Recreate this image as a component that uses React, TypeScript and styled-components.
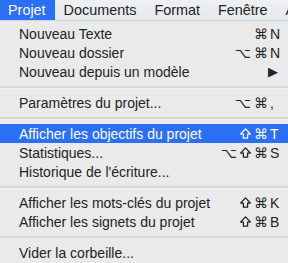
import React from 'react';
import styled, { createGlobalStyle } from 'styled-components';

const GlobalStyle = createGlobalStyle`
	html, body {
		margin: 0;
		padding: 0;
		background: #ebebeb;
	}
	body {
		font-family: 'Liberation Sans', Arial, sans-serif;
		-webkit-font-smoothing: antialiased;
	}
`;

const Screen = styled.div`
	width: 288px;
	height: 263px;
	overflow: hidden;
	background: #eaeaea;
	color: #232323;
`;

const MenuBar = styled.div`
	display: flex;
	height: 21px;
	background: linear-gradient(#eef0f3, #e6e9ed);
	border-bottom: 1px solid #cfd1d4;
	box-sizing: border-box;
	white-space: nowrap;
	overflow: hidden;
`;

const BarItem = styled.div<{ $active?: boolean }>`
	display: flex;
	align-items: center;
	flex-shrink: 0;
	padding: 0 9px;
	font-size: 14.4px;
	background: ${(p) => (p.$active ? '#2a6ff4' : 'transparent')};
	color: ${(p) => (p.$active ? '#ffffff' : '#222222')};

	&:first-child {
		padding-left: 8px;
	}
`;

const Menu = styled.div`
	display: flex;
	flex-direction: column;
	padding-top: 3px;
	background: #eaeaea;
`;

const Row = styled.div<{ $selected?: boolean }>`
	display: flex;
	align-items: center;
	justify-content: space-between;
	height: 19px;
	padding: 0 6px 0 19px;
	font-size: 14px;
	white-space: nowrap;
	background: ${(p) => (p.$selected ? '#2a6ff4' : 'transparent')};
	color: ${(p) => (p.$selected ? '#ffffff' : '#232323')};
`;

const Separator = styled.div`
	height: 12px;
	display: flex;
	align-items: center;

	&::after {
		content: '';
		display: block;
		width: 100%;
		height: 2px;
		background: #d6d6d6;
		border-bottom: 1px solid #f2f2f2;
	}
`;

const Shortcut = styled.div`
	display: flex;
	align-items: center;
	font-family: 'DejaVu Sans', 'Liberation Sans', sans-serif;
`;

const Mods = styled.span`
	display: flex;
	align-items: center;
	gap: 3px;
	font-size: 14px;
`;

const Key = styled.span`
	width: 12px;
	margin-left: 2px;
	font-family: 'Liberation Sans', Arial, sans-serif;
	font-size: 14px;
	text-align: left;
`;

const Arrow = styled.span`
	font-family: 'DejaVu Sans', sans-serif;
	font-size: 13px;
	margin-right: 4px;
`;

const ShiftIcon = () => (
	<svg width="11" height="11" viewBox="0 0 11 11" fill="none">
		<path
			d="M5.5 0.9 L10.3 6 H7.6 V10.2 H3.4 V6 H0.7 Z"
			stroke="currentColor"
			strokeWidth="1.25"
			strokeLinejoin="round"
		/>
	</svg>
);

type Item =
	| { kind: 'sep' }
	| { kind: 'item'; label: string; mods?: string; key?: string; submenu?: boolean; selected?: boolean };

const items: Item[] = [
	{ kind: 'item', label: 'Nouveau Texte', mods: '⌘', key: 'N' },
	{ kind: 'item', label: 'Nouveau dossier', mods: '⌥⌘', key: 'N' },
	{ kind: 'item', label: 'Nouveau depuis un modèle', submenu: true },
	{ kind: 'sep' },
	{ kind: 'item', label: 'Paramètres du projet...', mods: '⌥⌘', key: ',' },
	{ kind: 'sep' },
	{ kind: 'item', label: 'Afficher les objectifs du projet', mods: '⇧⌘', key: 'T', selected: true },
	{ kind: 'item', label: 'Statistiques...', mods: '⌥⇧⌘', key: 'S' },
	{ kind: 'item', label: "Historique de l'écriture..." },
	{ kind: 'sep' },
	{ kind: 'item', label: 'Afficher les mots-clés du projet', mods: '⇧⌘', key: 'K' },
	{ kind: 'item', label: 'Afficher les signets du projet', mods: '⇧⌘', key: 'B' },
	{ kind: 'sep' },
	{ kind: 'item', label: 'Vider la corbeille...' },
];

const App = () => {
	return (
		<Screen>
			<GlobalStyle />
			<MenuBar>
				<BarItem $active>Projet</BarItem>
				<BarItem>Documents</BarItem>
				<BarItem>Format</BarItem>
				<BarItem>Fenêtre</BarItem>
				<BarItem>Aide</BarItem>
			</MenuBar>
			<Menu>
				{items.map((item, i) =>
					item.kind === 'sep' ? (
						<Separator key={i} />
					) : (
						<Row key={i} $selected={item.selected}>
							<span>{item.label}</span>
							{item.submenu ? (
								<Arrow>▶</Arrow>
							) : item.key ? (
								<Shortcut>
									<Mods>
										{Array.from(item.mods ?? '').map((g, j) =>
											g === '⇧' ? <ShiftIcon key={j} /> : <span key={j}>{g}</span>
										)}
									</Mods>
									<Key>{item.key}</Key>
								</Shortcut>
							) : null}
						</Row>
					)
				)}
			</Menu>
		</Screen>
	);
};

export default App;
